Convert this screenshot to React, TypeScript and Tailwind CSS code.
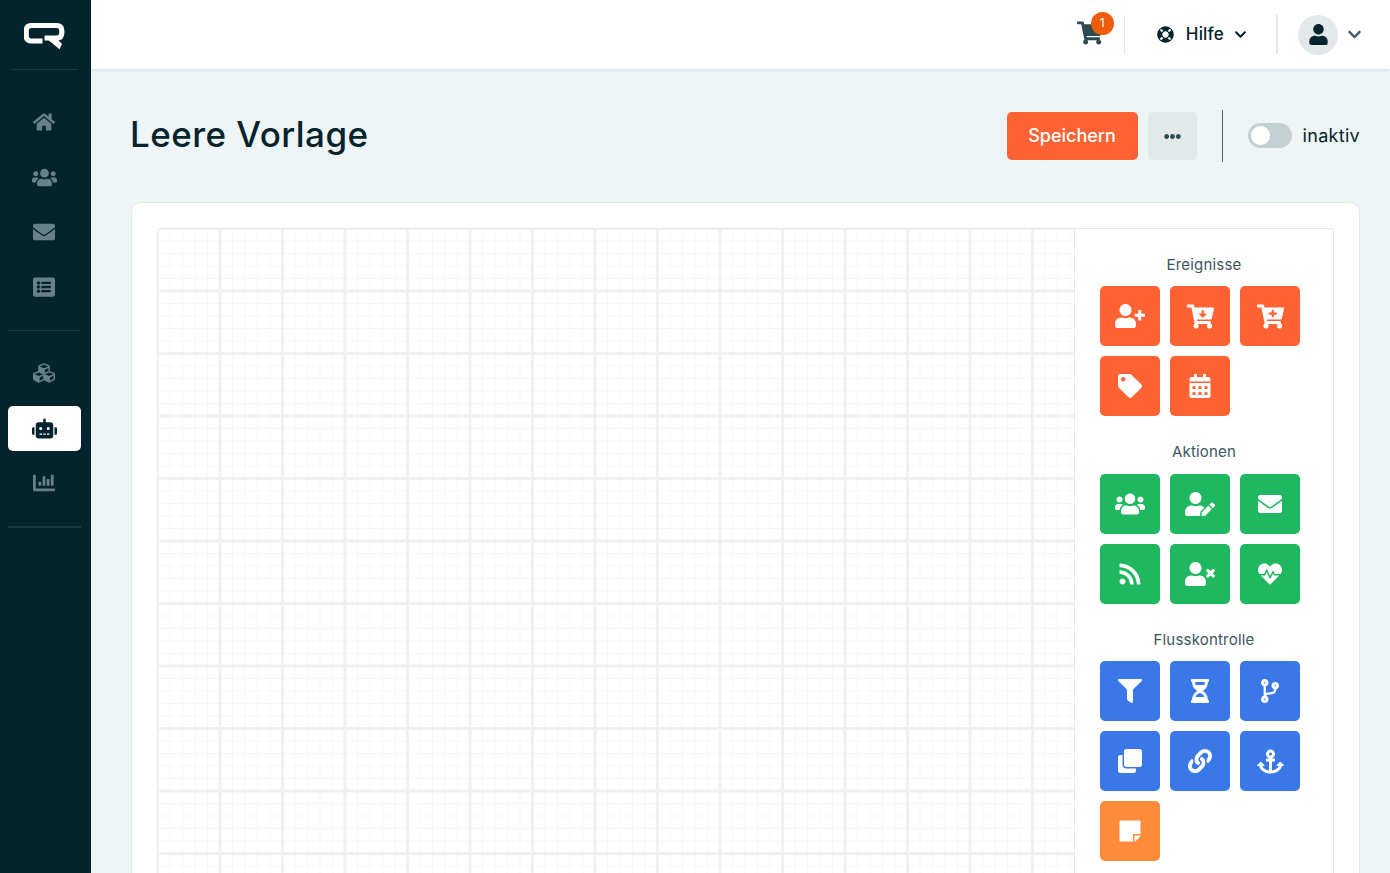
import {
  FaAnchor,
  FaCalendarAlt,
  FaCartArrowDown,
  FaCartPlus,
  FaChartBar,
  FaChevronDown,
  FaClone,
  FaCodeBranch,
  FaCubes,
  FaEllipsisH,
  FaEnvelope,
  FaFilter,
  FaHeartbeat,
  FaHome,
  FaHourglassHalf,
  FaLifeRing,
  FaLink,
  FaListAlt,
  FaRobot,
  FaRss,
  FaShoppingCart,
  FaStickyNote,
  FaTag,
  FaUser,
  FaUserEdit,
  FaUserPlus,
  FaUsers,
  FaUserTimes,
} from 'react-icons/fa';
import type { IconType } from 'react-icons';

const orange = 'bg-[#ff6333]';
const green = 'bg-[#1fb860]';
const blue = 'bg-[#3a78e7]';
const amber = 'bg-[#ff8c3b]';

const groups: {
  title: string;
  className: string;
  headingClass: string;
  items: { icon: IconType; color: string; size?: number }[];
}[] = [
  {
    title: 'Ereignisse',
    className: 'mb-[25px]',
    headingClass: 'mb-[10px]',
    items: [
      { icon: FaUserPlus, color: orange, size: 30 },
      { icon: FaCartArrowDown, color: orange, size: 27 },
      { icon: FaCartPlus, color: orange, size: 27 },
      { icon: FaTag, color: orange },
      { icon: FaCalendarAlt, color: orange },
    ],
  },
  {
    title: 'Aktionen',
    className: 'mb-[25px]',
    headingClass: 'mb-[11px]',
    items: [
      { icon: FaUsers, color: green, size: 30 },
      { icon: FaUserEdit, color: green, size: 30 },
      { icon: FaEnvelope, color: green },
      { icon: FaRss, color: green },
      { icon: FaUserTimes, color: green, size: 30 },
      { icon: FaHeartbeat, color: green },
    ],
  },
  {
    title: 'Flusskontrolle',
    className: '',
    headingClass: 'mb-[10px]',
    items: [
      { icon: FaFilter, color: blue },
      { icon: FaHourglassHalf, color: blue },
      { icon: FaCodeBranch, color: blue },
      { icon: FaClone, color: blue },
      { icon: FaLink, color: blue },
      { icon: FaAnchor, color: blue, size: 27 },
      { icon: FaStickyNote, color: amber },
    ],
  },
];

function Logo() {
  return (
    <svg viewBox="0 0 42 30" className="w-[42px] h-[30px]" fill="none" stroke="white" strokeWidth="5.2">
      <path d="M18.5 21H7.5Q2.2 21 2.2 15.7V10.8Q2.2 5.5 7.5 5.5H32.5Q37.8 5.5 37.8 10.8V12.7Q37.8 18 32.5 18H20.5" />
      <polygon points="23,19 33,19 38,24 35.5,29.3" fill="white" stroke="none" />
    </svg>
  );
}

function SideItem({ icon: Icon, active, size = 22 }: { icon: IconType; active?: boolean; size?: number }) {
  return (
    <div
      className={`h-[45px] rounded-[5px] flex items-center justify-center ${
        active ? 'bg-white text-[#03242c]' : 'pr-[1px] pb-[1px] text-[#688087]'
      }`}
    >
      <Icon size={size} />
    </div>
  );
}

export default function App() {
  return (
    <div className="h-screen overflow-hidden flex bg-[#eff4f7] text-[#03242c] font-['Inter',sans-serif]">
      <aside className="w-[91px] shrink-0 bg-[#03242c] flex flex-col">
        <div className="h-[70px] ml-[11px] mr-[13px] border-b border-[#1b3a41] flex items-center justify-center shrink-0">
          <Logo />
        </div>
        <div className="pl-2 pr-[10px] pt-[30px] flex flex-col gap-[10px]">
          <SideItem icon={FaHome} />
          <SideItem icon={FaUsers} size={25} />
          <SideItem icon={FaEnvelope} />
          <SideItem icon={FaListAlt} />
        </div>
        <div className="ml-2 mr-[10px] mt-5 h-[1px] bg-[#1b3a41]" />
        <div className="pl-2 pr-[10px] pt-5 flex flex-col gap-[10px]">
          <SideItem icon={FaCubes} />
          <SideItem icon={FaRobot} active size={25} />
          <SideItem icon={FaChartBar} />
        </div>
        <div className="ml-2 mr-[10px] mt-5 h-[2px] bg-[#1b3a41]" />
      </aside>

      <div className="flex-1 min-w-0 flex flex-col">
        <header className="h-[69px] shrink-0 bg-white shadow-[0_1px_4px_rgba(3,36,44,0.12)] flex items-center justify-end pr-[28px] relative z-10">
          <div className="relative mr-[21px] mb-[4px] text-[#2c4a52]">
            <FaShoppingCart size={26} />
            <span className="absolute -top-[8px] left-[14px] w-[23px] h-[23px] rounded-full bg-[#ee5c0c] text-white text-[12px] flex items-center justify-center">
              1
            </span>
          </div>
          <div className="w-[1px] h-[39px] bg-[#e3e9eb]" />
          <div className="flex items-center pl-[32px] pr-[29px]">
            <FaLifeRing size={17} className="mr-[12px]" />
            <span className="text-[17px] font-medium tracking-[0.2px] mr-[10px]">Hilfe</span>
            <FaChevronDown size={13} />
          </div>
          <div className="w-[2px] h-[39px] bg-[#e3e9eb]" />
          <div className="flex items-center pl-[20px]">
            <div className="w-10 h-10 rounded-full bg-[#e3e9eb] flex items-center justify-center mr-[9px]">
              <FaUser size={21} />
            </div>
            <FaChevronDown size={15} className="text-[#44606a]" />
          </div>
        </header>

        <main className="flex-1 min-h-0 pl-10 pr-[30px] pt-[41px]">
          <div className="flex items-center justify-between h-[52px]">
            <h1 className="text-[35px] font-medium tracking-[0.45px] -ml-[1px] pb-[3px]">Leere Vorlage</h1>
            <div className="flex items-center">
              <button className="w-[131px] h-12 pb-[2px] rounded-[5px] bg-[#ff6333] text-white text-[18px] font-medium">
                Speichern
              </button>
              <button className="ml-[10px] w-[49px] h-12 rounded-[5px] bg-[#e3e9eb] flex items-center justify-center">
                <FaEllipsisH size={17} className="text-[#2c4a52]" />
              </button>
              <div className="mx-[25px] w-[1px] h-[52px] bg-[#4a656d]" />
              <div className="w-11 h-[25px] mb-[1px] rounded-full bg-[#c4d0d2] p-[3px] mr-[11px]">
                <div className="w-[19px] h-[19px] rounded-full bg-white" />
              </div>
              <span className="text-[18px] tracking-[0.3px] pb-[2px]">inaktiv</span>
            </div>
          </div>

          <div className="mt-[40px] h-[800px] bg-white rounded-[10px] border border-[#e3e9eb] p-[25px] flex items-start">
            <div className="flex-1 h-[760px] rounded-l-[4px] border border-[#e3e9eb] bg-white bg-[linear-gradient(#f1f1f1_2.5px,transparent_2.5px),linear-gradient(90deg,#f1f1f1_2.5px,transparent_2.5px),linear-gradient(#f6f6f6_1px,transparent_1px),linear-gradient(90deg,#f6f6f6_1px,transparent_1px)] bg-[size:62.5px_62.5px,62.5px_62.5px,12.5px_12.5px,12.5px_12.5px] bg-[position:-2px_-2px,-2px_-2px,-1px_-1px,-1px_-1px]" />
            <div className="w-[260px] h-[760px] shrink-0 -ml-[1px] rounded-r-[4px] border border-[#e3e9eb] px-[25px] pt-[25px] bg-white">
              {groups.map((g) => (
                <section key={g.title} className={g.className}>
                  <h2 className={`text-[15px] leading-[22px] tracking-[0.2px] text-center text-[#3c5660] ${g.headingClass}`}>
                    {g.title}
                  </h2>
                  <div className="grid grid-cols-[60px_60px_60px] gap-[10px]">
                    {g.items.map(({ icon: Icon, color, size = 24 }, i) => (
                      <div key={i} className={`h-[60px] rounded-[5px] text-white flex items-center justify-center ${color}`}>
                        <Icon size={size} />
                      </div>
                    ))}
                  </div>
                </section>
              ))}
            </div>
          </div>
        </main>
      </div>
    </div>
  );
}
